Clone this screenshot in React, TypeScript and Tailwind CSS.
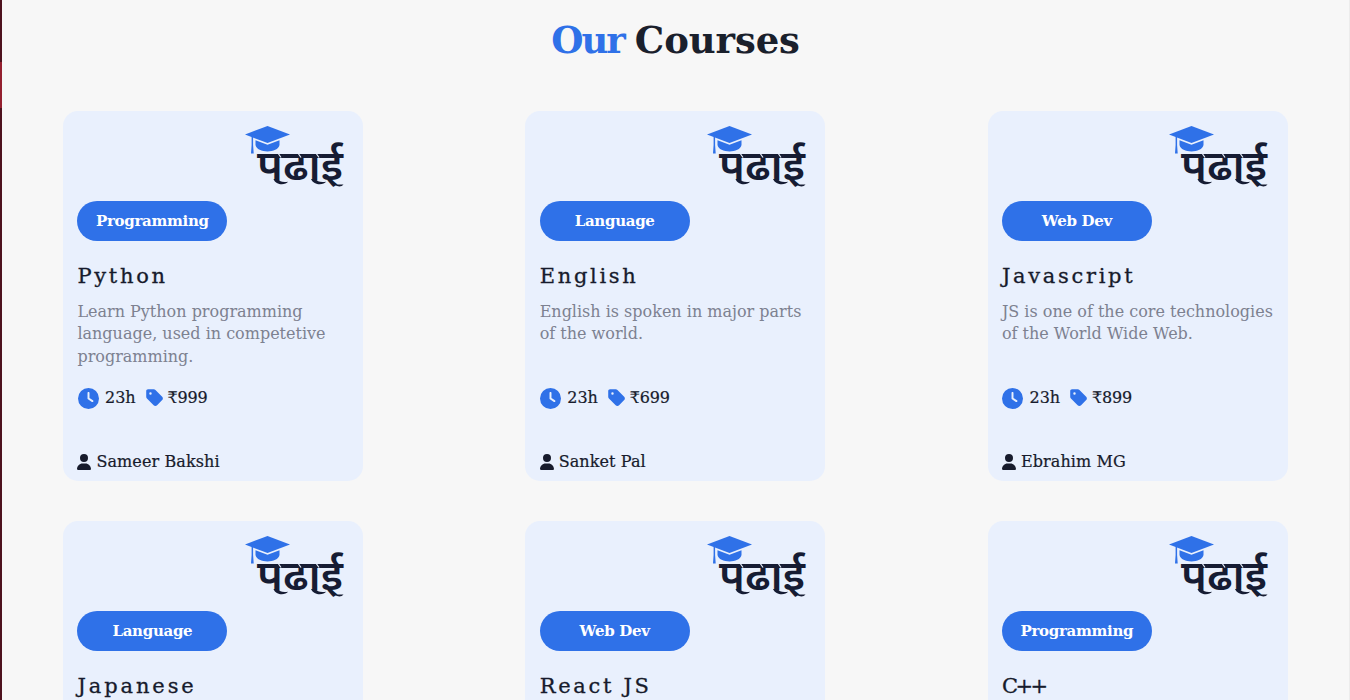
import React from "react";
import { FaUser, FaTag, FaClock } from "react-icons/fa6";

type Course = {
  category: string;
  title: string;
  titleTracking?: string;
  lines?: string[];
  price?: string;
  teacher?: string;
};

const courses: Course[] = [
  { category: "Programming", title: "Python", lines: ["Learn Python programming", "language, used in competetive", "programming."], price: "₹999", teacher: "Sameer Bakshi" },
  { category: "Language", title: "English", lines: ["English is spoken in major parts", "of the world."], price: "₹699", teacher: "Sanket Pal" },
  { category: "Web Dev", title: "Javascript", lines: ["JS is one of the core technologies", "of the World Wide Web."], price: "₹899", teacher: "Ebrahim MG" },
  { category: "Language", title: "Japanese", titleTracking: "tracking-[2.9px]" },
  { category: "Web Dev", title: "React JS" },
  { category: "Programming", title: "C++", titleTracking: "tracking-[-2.5px]" },
];

function Logo() {
  return (
    <svg className="block h-[62px] w-[104px] overflow-visible" viewBox="0 0 104 62" aria-label="पढाई">
      <path d="M3 9.5 25.5 1 48 9.5 25.5 18Z" fill="#2f71e8" />
      <path d="M13.5 15.2 25.5 19.8 37.5 15.2V20C36 28.5 15 28.5 13.5 20Z" fill="#2f71e8" />
      <path d="M9.6 12V20L9 28.500H11.7L11.1 20V12Z" fill="#2f71e8" />
      <text x="15" y="55.3" fontSize="42" fontWeight="600" textLength="86" lengthAdjust="spacingAndGlyphs" fill="#161c33" fontFamily="Noto Sans, sans-serif">पढाई</text>
      <g fill="#161c33">
        <path d="M31.500 54H36.500C37.500 56.500 40 57.500 46 56.800C44 60 34 61 31.500 54Z" />
        <path d="M69 54H74C75 56.500 78 57.500 84 56.800C82 60 72 61 69 54Z" />
        <path d="M89 56C92 59 96 60 101.500 59.500C99 63 92 61.500 89 56Z" />
      </g>
      <g stroke="#e9f0fd" strokeWidth="1.2">
        <path d="M34.5 26 39 32.500" />
        <path d="M54.5 26 59 32.500" />
        <path d="M72.5 26 77 32.500" />
      </g>
    </svg>
  );
}

function CourseCard({ course }: { course: Course }) {
  return (
    <article className="flex h-[370px] w-[300px] flex-col rounded-[15px] bg-[#e9f0fd] px-[14.4px] pt-[14px]">
      <div className="flex h-[76px] justify-end pr-[2.8px]">
        <Logo />
      </div>
      <div className="flex h-10 w-[150px] items-center justify-center rounded-[20px] bg-[#2f71e8] text-[15px] font-bold tracking-[-0.3px] text-white">
        {course.category}
      </div>
      <h2 className={`mt-[20px] h-[30px] text-[21px] leading-[30px] text-[#171b2c] [-webkit-text-stroke:0.3px] ${course.titleTracking ?? "tracking-[2.7px]"}`}>{course.title}</h2>
      {course.lines && (
        <div className="mt-[10px] h-[68px] text-[16px] leading-[22.4px] text-[#7d8190]">
          {course.lines.map((line) => (
            <p key={line} className="whitespace-nowrap">{line}</p>
          ))}
        </div>
      )}
      {course.price && (
        <div className="mt-[18px] flex h-[22px] items-center pl-[0.6px] text-[16px] text-[#171b2c] [-webkit-text-stroke:0.2px]">
          <FaClock className="size-[21px] text-[#2f71e8]" />
          <span className="ml-[6px] w-[30px]">23h</span>
          <FaTag className="ml-[10px] size-[19.5px] text-[#2f71e8]" />
          <span className="ml-[3px] tracking-[-0.2px]">{course.price}</span>
        </div>
      )}
      {course.teacher && (
        <div className="mt-[42px] flex h-[22px] items-center text-[16px] tracking-[0.1px] text-[#171b2c] [-webkit-text-stroke:0.2px]">
          <FaUser className="h-[16px] w-[14px]" />
          <span className="ml-[5px]">{course.teacher}</span>
        </div>
      )}
    </article>
  );
}

export default function App() {
  return (
    <div className="flex h-[700px] w-full overflow-hidden bg-[#f7f7f7] font-['DejaVu_Serif',serif]">
      <div className="flex w-[2px] flex-col bg-[#4d121e]">
        <div className="mt-[62px] h-[46px] bg-[#94202f]" />
      </div>
      <main className="flex-1 border-r border-[#ececec]">
        <h1 className="flex h-[111px] justify-center gap-[11px] pt-[10px] text-[37px] font-bold leading-[60px] text-[#1a202c]">
          <span className="tracking-[-2px] text-[#2f71e8]">Our</span>
          <span className="tracking-[-0.1px]">Courses</span>
        </h1>
        <section className="grid grid-cols-[repeat(3,300px)] justify-between gap-y-10 pl-[61px] pr-[61.5px]">
          {courses.map((course) => (
            <CourseCard key={course.title} course={course} />
          ))}
        </section>
      </main>
    </div>
  );
}
